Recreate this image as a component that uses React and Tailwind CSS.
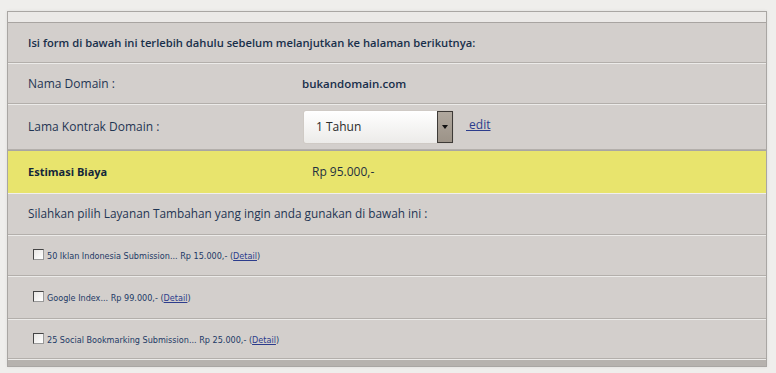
export default function App() {
  const font = { fontFamily: '"Open Sans", "Noto Sans", sans-serif' };
  const small = { fontFamily: 'Tahoma, "DejaVu Sans Condensed", "Liberation Sans", sans-serif' };
  const rows = [
    { t: "50 Iklan Indonesia Submission... Rp 15.000,- ", h: "h-[41px]" },
    { t: "Google Index... Rp 99.000,- ", h: "h-[43px]" },
    { t: "25 Social Bookmarking Submission... Rp 25.000,- ", h: "h-[40px]" },
  ];
  return (
    <div className="min-h-screen w-full bg-[#efeeec] pt-[11px] pl-[7px]" style={font}>
      <div className="w-[760px] border border-[#a9a6a3] bg-[#d3cfcc] text-[#1f3553] shadow-[0_0_3px_rgba(0,0,0,0.08)]">
        <div className="h-[11px] bg-[#ebe9e7] border-b border-[#a8a4a1]" />
        <div className="h-[40px] flex items-center pl-[20px] pt-[2px] border-b border-[#b3afab] text-[11.2px] font-semibold text-[#182e4a]">
          Isi form di bawah ini terlebih dahulu sebelum melanjutkan ke halaman berikutnya:
        </div>
        <div className="h-[41px] flex items-center border-t border-[#ecebe9] border-b border-b-[#b3afab] text-[12px]">
          <div className="w-[294px] pl-[20px]">Nama Domain :</div>
          <div className="font-semibold text-[11.5px] text-[#182e4a]">bukandomain.com</div>
        </div>
        <div className="h-[46px] flex items-center border-t border-[#ecebe9] border-b border-b-[#b3afab] text-[12px]">
          <div className="w-[295px] pl-[20px]">Lama Kontrak Domain :</div>
          <div className="flex h-[34px] w-[151px] items-stretch rounded-[3px] border border-[#cfcac5] bg-gradient-to-b from-[#ffffff] to-[#ecebe9] shadow-[inset_0_1px_0_#fff]">
            <div className="flex-1 flex items-center pl-[12px] text-[12px] text-[#2a2a2a]">1 Tahun</div>
            <div className="w-[16px] flex items-center justify-center bg-gradient-to-b from-[#b0a89e] to-[#9c9388] border border-[#3d3a37]">
              <div className="w-0 h-0 border-l-[3px] border-r-[3px] border-t-[4px] border-l-transparent border-r-transparent border-t-[#111]" />
            </div>
          </div>
          <a className="ml-[12px] mt-[-4px] text-[12px] text-[#2c3c8c] underline">&nbsp;edit</a>
        </div>
        <div className="h-[44px] flex items-center border-t border-[#a9a6a3] border-b border-b-[#f0efed] bg-[#e8e46d] text-[12px]">
          <div className="w-[304px] pl-[20px] font-bold text-[11px] text-[#13263a]">Estimasi Biaya</div>
          <div className="text-[#1f3040]">Rp 95.000,-</div>
        </div>
        <div className="h-[41px] flex items-center pl-[20px] border-b border-[#b3afab] text-[11.8px]">
          Silahkan pilih Layanan Tambahan yang ingin anda gunakan di bawah ini :
        </div>
        {rows.map((r, i) => (
          <div key={i} className={`${r.h} flex items-center pl-[25px] border-t border-[#ecebe9] border-b border-b-[#b3afab]`}>
            <div className="w-[11px] h-[11px] mt-[-2px] border border-t-[#444] border-l-[#444] border-r-[#999] border-b-[#999] bg-gradient-to-br from-[#e8e6e4] to-[#ffffff]" />
            <div className="ml-[3px] mt-[3px] text-[9px] text-[#1d3a66]" style={small}>
              {r.t}(<span className="underline text-[#2c3c8c]">Detail</span>)
            </div>
          </div>
        ))}
        <div className="h-[7px] border-t border-[#ecebe9] bg-[#b6b2ae]" />
      </div>
    </div>
  );
}
